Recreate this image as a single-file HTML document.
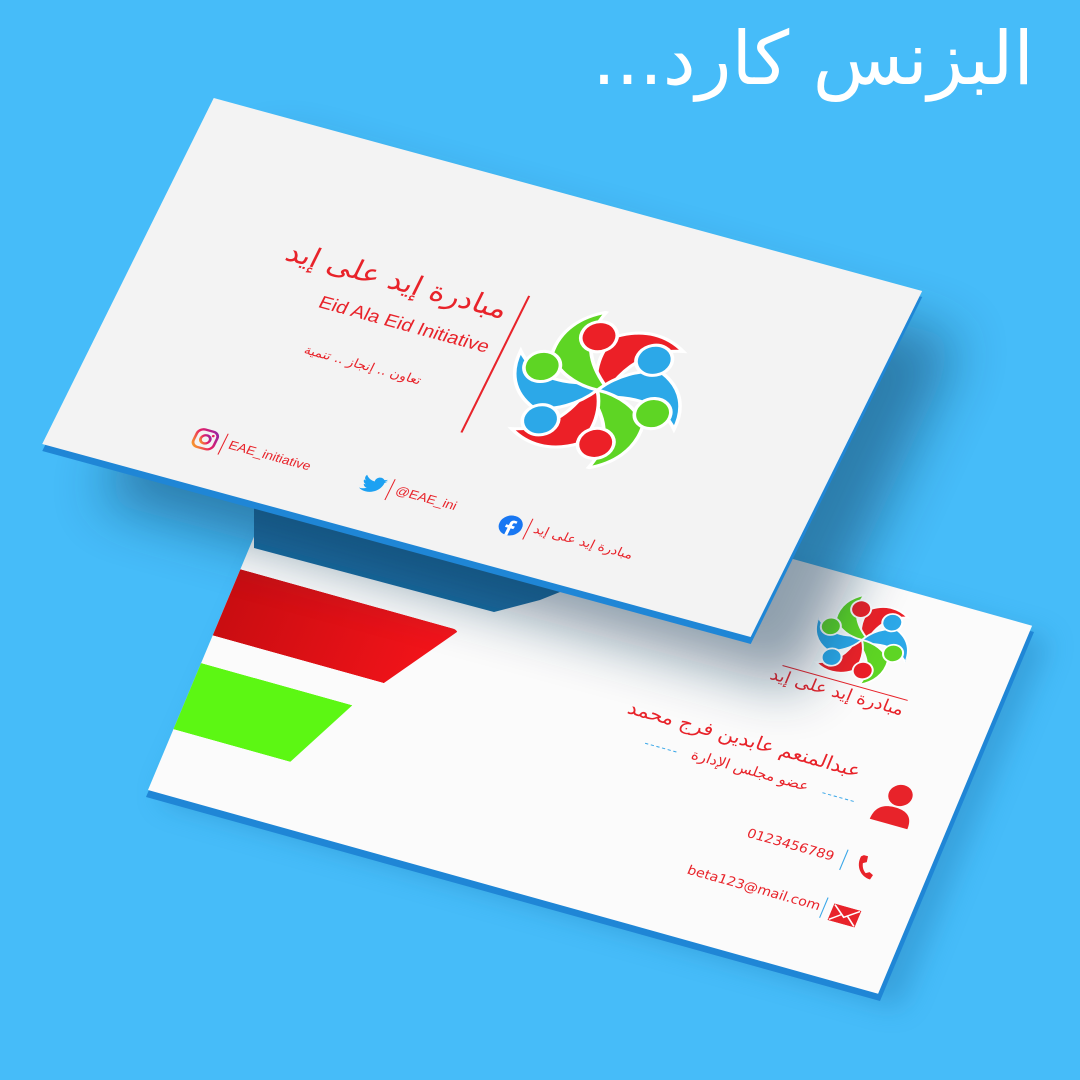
<!DOCTYPE html>
<html><head><meta charset="utf-8"><style>
*{margin:0;padding:0;box-sizing:border-box}
body{width:1080px;height:1080px;overflow:hidden;background:#46bcf9;position:relative;font-family:"DejaVu Sans","Liberation Sans",sans-serif}
.title{position:absolute;right:46px;top:16px;color:#fff;font-size:74px;direction:rtl;font-family:"DejaVu Sans",sans-serif;white-space:nowrap;letter-spacing:2px}
.card{position:absolute;left:0;top:0;width:700px;height:400px;transform-origin:0 0;overflow:hidden}
.t{position:absolute;white-space:nowrap;color:#e8232a}
svg.full{position:absolute;left:0;top:0}
</style></head><body>
<svg class="full" width="1080" height="1080">
<defs>
<filter id="b1" x="-30%" y="-30%" width="160%" height="160%"><feGaussianBlur stdDeviation="28"/></filter>
<filter id="b2" x="-30%" y="-30%" width="160%" height="160%"><feGaussianBlur stdDeviation="14"/></filter>
</defs>
<polygon points="320,440 1050,640 900,1008 160,800" fill="#1d6fa6" opacity="0.35" filter="url(#b2)"/>
<polygon points="302,428 1034,632 880,1001 146,797" fill="#1f86d6"/>
</svg>
<div class="card" style="transform:matrix(1.043,0.291,-0.385,0.92,302,422);background:#fbfbfb">
  <div style="position:absolute;left:-20px;top:160px;width:230px;height:72px;background:linear-gradient(90deg,#c50c10,#f5141a);clip-path:polygon(0 0,100% 0,80% 100%,0 100%);border-radius:6px"></div>
  <div style="position:absolute;left:-20px;top:262px;width:165px;height:72px;background:#5cf713;clip-path:polygon(0 0,100% 0,80% 100%,0 100%)"></div>
  <svg style="position:absolute;left:514px;top:15px" width="90" height="90" viewBox="-100 -100 200 200"><g id="logoB"></g></svg>
  <div style="position:absolute;left:500px;top:106px;width:120px;height:1px;background:#e8232a"></div>
  <div class="t" style="left:505px;top:108px;font-size:17px;direction:rtl;width:115px;text-align:right">مبادرة إيد على إيد</div>
  <div class="t" style="left:380px;top:178px;font-size:19px;direction:rtl;width:225px;text-align:right">عبدالمنعم عابدين فرج محمد</div>
  <div class="t" style="left:440px;top:210px;font-size:14px;direction:rtl;width:140px;text-align:center">عضو مجلس الإدارة</div>
  <div style="position:absolute;left:410px;top:219px;width:30px;border-top:1px dashed #3aa7e8"></div>
  <div style="position:absolute;left:580px;top:219px;width:30px;border-top:1px dashed #3aa7e8"></div>
  <svg style="position:absolute;left:628px;top:188px" width="40" height="46" viewBox="0 0 40 46"><circle cx="20" cy="13" r="11" fill="#e8232a"/><path d="M2 44 C2 30 10 26 20 26 C30 26 38 30 38 44 Z" fill="#e8232a"/></svg>
  <div class="t" style="left:530px;top:272px;font-size:13px">0123456789</div>
  <div style="position:absolute;left:622px;top:268px;width:1px;height:22px;background:#3aa7e8"></div>
  <svg style="position:absolute;left:634px;top:268px" width="20" height="24" viewBox="0 0 20 24"><path d="M4 1 L8 1 L9 7 L6 9 C7 13 9 16 12 18 L15 16 L19 18 L18 23 C9 23 1 14 2 3 Z" fill="#e8232a"/></svg>
  <div class="t" style="left:492px;top:324px;font-size:13px">beta123@mail.com</div>
  <div style="position:absolute;left:622px;top:320px;width:1px;height:22px;background:#3aa7e8"></div>
  <svg style="position:absolute;left:630px;top:324px" width="26" height="18"><rect width="26" height="18" fill="#e8232a"/><path d="M1 1 L13 11 L25 1 M1 17 L10 9 M25 17 L16 9" stroke="#fff" stroke-width="1.5" fill="none"/></svg>
</div>
<svg class="full" width="1080" height="1080">
<polygon points="254,470 640,560 540,600 494,612 254,548" fill="#1a6ea5"/>
<polygon points="270,150 960,340 800,690 100,500" fill="#0a3050" opacity="0.45" filter="url(#b1)"/>
<polygon points="213.75,104 922.25,297 750.75,644 42.25,451" fill="#1f86d6"/>
</svg>
<div class="card" style="transform:matrix(1.012,0.2757,-0.4288,0.865,213.75,98);background:#f3f3f3">
  <svg style="position:absolute;left:372px;top:108px" width="176" height="166" viewBox="-100 -100 200 200"><g id="logoA"></g></svg>
  <div style="position:absolute;left:359px;top:114px;width:2px;height:158px;background:#e8232a"></div>
  <div class="t" style="left:140px;top:118px;font-size:29px;direction:rtl;width:207px;text-align:right">مبادرة إيد على إيد</div>
  <div class="t" style="left:150px;top:168px;font-size:19px;width:197px;text-align:right;font-family:'Liberation Sans',sans-serif">Eid Ala Eid Initiative</div>
  <div class="t" style="left:180px;top:224px;font-size:13px;direction:rtl;width:130px;text-align:center">تعاون .. إنجاز .. تنمية</div>
  <svg style="position:absolute;left:128px;top:338px" width="24" height="24"><defs><linearGradient id="ig" x1="0" y1="1" x2="1" y2="0"><stop offset="0" stop-color="#f9a825"/><stop offset=".5" stop-color="#e91e63"/><stop offset="1" stop-color="#8e24aa"/></linearGradient></defs><rect x="2" y="2" width="20" height="20" rx="6" fill="none" stroke="url(#ig)" stroke-width="2.5"/><circle cx="12" cy="12" r="4.5" fill="none" stroke="url(#ig)" stroke-width="2.5"/><circle cx="17.5" cy="6.5" r="1.3" fill="#e91e63"/></svg>
  <div style="position:absolute;left:157px;top:338px;width:1px;height:24px;background:#e8232a"></div>
  <div class="t" style="left:163px;top:341px;font-size:13px;font-family:'Liberation Sans',sans-serif">EAE_initiative</div>
  <svg style="position:absolute;left:294px;top:340px" width="24" height="20" viewBox="0 0 24 20"><path d="M23 2.5c-.8.4-1.7.6-2.6.7.9-.6 1.6-1.4 2-2.5-.9.5-1.9.9-2.9 1.1A4.600 4.600 0 0 0 11.6 6 13 13 0 0 1 2.1 1.2a4.600 4.600 0 0 0 1.400 6.100c-.7 0-1.400-.2-2-.6 0 2.200 1.600 4.100 3.700 4.500-.7.2-1.400.2-2.100.1.600 1.800 2.300 3.200 4.300 3.200A9.200 9.200 0 0 1 .5 16.400 13 13 0 0 0 7.600 18.500c8.500 0 13.200-7 13.200-13.200v-.6c.9-.6 1.700-1.400 2.200-2.200z" fill="#1da1f2"/></svg>
  <div style="position:absolute;left:322px;top:338px;width:1px;height:24px;background:#e8232a"></div>
  <div class="t" style="left:328px;top:341px;font-size:13px;font-family:'Liberation Sans',sans-serif">@EAE_ini</div>
  <svg style="position:absolute;left:432px;top:342px" width="22" height="22"><circle cx="11" cy="11" r="11" fill="#1877f2"/><path d="M12.2 22v-8h2.6l.4-3h-3V9.2c0-.9.3-1.5 1.5-1.5h1.6V5.1c-.3 0-1.2-.1-2.3-.1-2.3 0-3.8 1.4-3.8 3.9V11H6.6v3h2.6v8z" fill="#fff"/></svg>
  <div style="position:absolute;left:459px;top:340px;width:1px;height:24px;background:#e8232a"></div>
  <div class="t" style="left:465px;top:343px;font-size:13px;direction:rtl">مبادرة إيد على إيد</div>
</div>
<div class="title">البزنس  كارد...</div>
<script>
var bl='<path d="M0,0 C-14,-22 -18,-50 -8,-72 C18,-92 46,-90 70,-76 C36,-68 16,-42 10,0 Z" fill="COL" stroke="#fff" stroke-width="4"/>';
var hd='<circle cx="-26" cy="-66" r="20" fill="COL" stroke="#fff" stroke-width="4"/>';
var cols=['#ec2027','#2ca8e8','#5ed524','#ec2027','#2ca8e8','#5ed524'],s='',h='';
for(var i=0;i<6;i++){s+='<g transform="rotate('+(i*60)+')">'+bl.replace(/COL/g,cols[i])+'</g>';h+='<g transform="rotate('+(i*60)+')">'+hd.replace(/COL/g,cols[i])+'</g>';}
document.getElementById('logoA').innerHTML=s+h;document.getElementById('logoB').innerHTML=s+h;
</script>
</body></html>
